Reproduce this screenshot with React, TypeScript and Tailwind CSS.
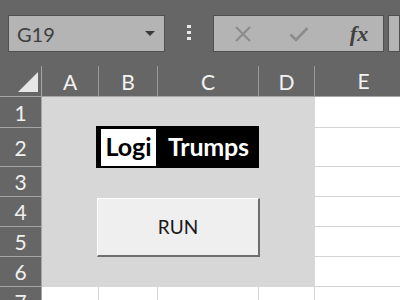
import React from 'react';

const F = { fontFamily: 'Lato, "Open Sans", sans-serif' };

export default function App() {
  const rows = [
    { n: '1', h: 'h-[31px]' },
    { n: '2', h: 'h-[39px]' },
    { n: '3', h: 'h-[30px]' },
    { n: '4', h: 'h-[30px]' },
    { n: '5', h: 'h-[30px]' },
    { n: '6', h: 'h-[30px]' },
    { n: '7', h: 'h-[30px]' },
  ];
  const cols = [
    { l: 'A', w: 'w-[57px]' },
    { l: 'B', w: 'w-[59px]' },
    { l: 'C', w: 'w-[101px]' },
    { l: 'D', w: 'w-[56px]' },
  ];
  return (
    <div className="relative w-[400px] h-[300px] overflow-hidden bg-[#666666] font-['Lato',sans-serif]">
      {/* toolbar */}
      <div className="flex h-[66px] items-start pt-[15px]">
        <div className="ml-[8px] flex h-[37px] w-[157px] items-center justify-between border border-[#505050] bg-[#b4b4b4] pl-[8px] pr-[9px]">
          <span className="text-[20px] text-[#3f3f3f]">G19</span>
          <svg width="10" height="5" viewBox="0 0 10 5"><path d="M0 0h10L5 5z" fill="#3a3a3a" /></svg>
        </div>
        <div className="flex w-[48px] flex-col items-center gap-[3px] pt-[10px]">
          <div className="h-[3px] w-[4px] bg-[#e8e8e8]" />
          <div className="h-[3px] w-[4px] bg-[#e8e8e8]" />
          <div className="h-[3px] w-[4px] bg-[#e8e8e8]" />
        </div>
        <div className="flex h-[37px] w-[171px] items-center border border-[#505050] bg-[#b4b4b4]">
          <div className="flex w-[56px] justify-center pl-[2px]">
            <svg width="18" height="18" viewBox="0 0 18 18"><path d="M2 2L16 16M16 2L2 16" stroke="#8c8c8c" strokeWidth="2.2" /></svg>
          </div>
          <div className="flex w-[56px] justify-center pl-[2px]">
            <svg width="20" height="16" viewBox="0 0 20 16"><path d="M1.5 8.5L7 14L18.5 2" stroke="#8c8c8c" strokeWidth="2.6" fill="none" /></svg>
          </div>
          <div className="flex w-[56px] justify-center pl-[10px]">
            <span className="text-[22px] italic text-[#404040] font-['Liberation_Serif',serif] font-bold">fx</span>
          </div>
        </div>
        <div className="ml-[4px] h-[37px] flex-1 border border-[#505050] bg-[#b4b4b4]" />
      </div>

      {/* column header */}
      <div className="flex h-[31px] border-b border-[#a5a5a5]">
        <div className="relative w-[42px] border-r border-[#a5a5a5]">
          <svg className="absolute left-[18px] top-[6px]" width="20" height="20" viewBox="0 0 20 20"><path d="M20 0V20H0z" fill="#e6e6e6" /></svg>
        </div>
        {cols.map((c) => (
          <div key={c.l} className={`${c.w} flex items-center justify-center border-r border-[#9a9a9a] pt-[1px] text-[21px] text-[#f2f2f2]`}>{c.l}</div>
        ))}
        <div className="flex flex-1 items-center justify-center pl-[12px] text-[21px] text-[#f2f2f2]">E</div>
      </div>

      {/* body */}
      {rows.map((r) => (
        <div key={r.n} className={`flex ${r.h} border-b border-[#d4d4d4]`}>
          <div className="flex w-[42px] items-center justify-center border-r border-b border-[#a5a5a5] bg-[#666666] pt-[1px] text-[21px] text-[#f0f0f0] -mb-px">{r.n}</div>
          {cols.map((c) => (
            <div key={c.l} className={`${c.w} border-r border-[#d4d4d4] bg-white`} />
          ))}
          <div className="flex-1 bg-white" />
        </div>
      ))}

      {/* form panel */}
      <div className="absolute left-[42px] top-[97px] flex h-[190px] w-[273px] flex-col items-start bg-[#d7d7d7] pl-[54px] pt-[29px]">
        <div className="flex h-[42px] w-[163px] items-center border-2 border-black bg-black pl-[3px]">
          <div className="flex h-[37px] w-[55px] items-center justify-center bg-white text-[25px] font-bold text-black" style={F}>Logi</div>
          <div className="ml-[12px] text-[25px] font-bold tracking-[-0.2px] text-white" style={F}>Trumps</div>
        </div>
        <div className="ml-[1px] mt-[30px] flex h-[59px] w-[163px] items-center justify-center border-t border-l border-white border-r-2 border-b-2 border-r-[#6e6e6e] border-b-[#6e6e6e] bg-[#efefef] text-[19px] text-[#1a1a1a]">RUN</div>
      </div>
    </div>
  );
}
